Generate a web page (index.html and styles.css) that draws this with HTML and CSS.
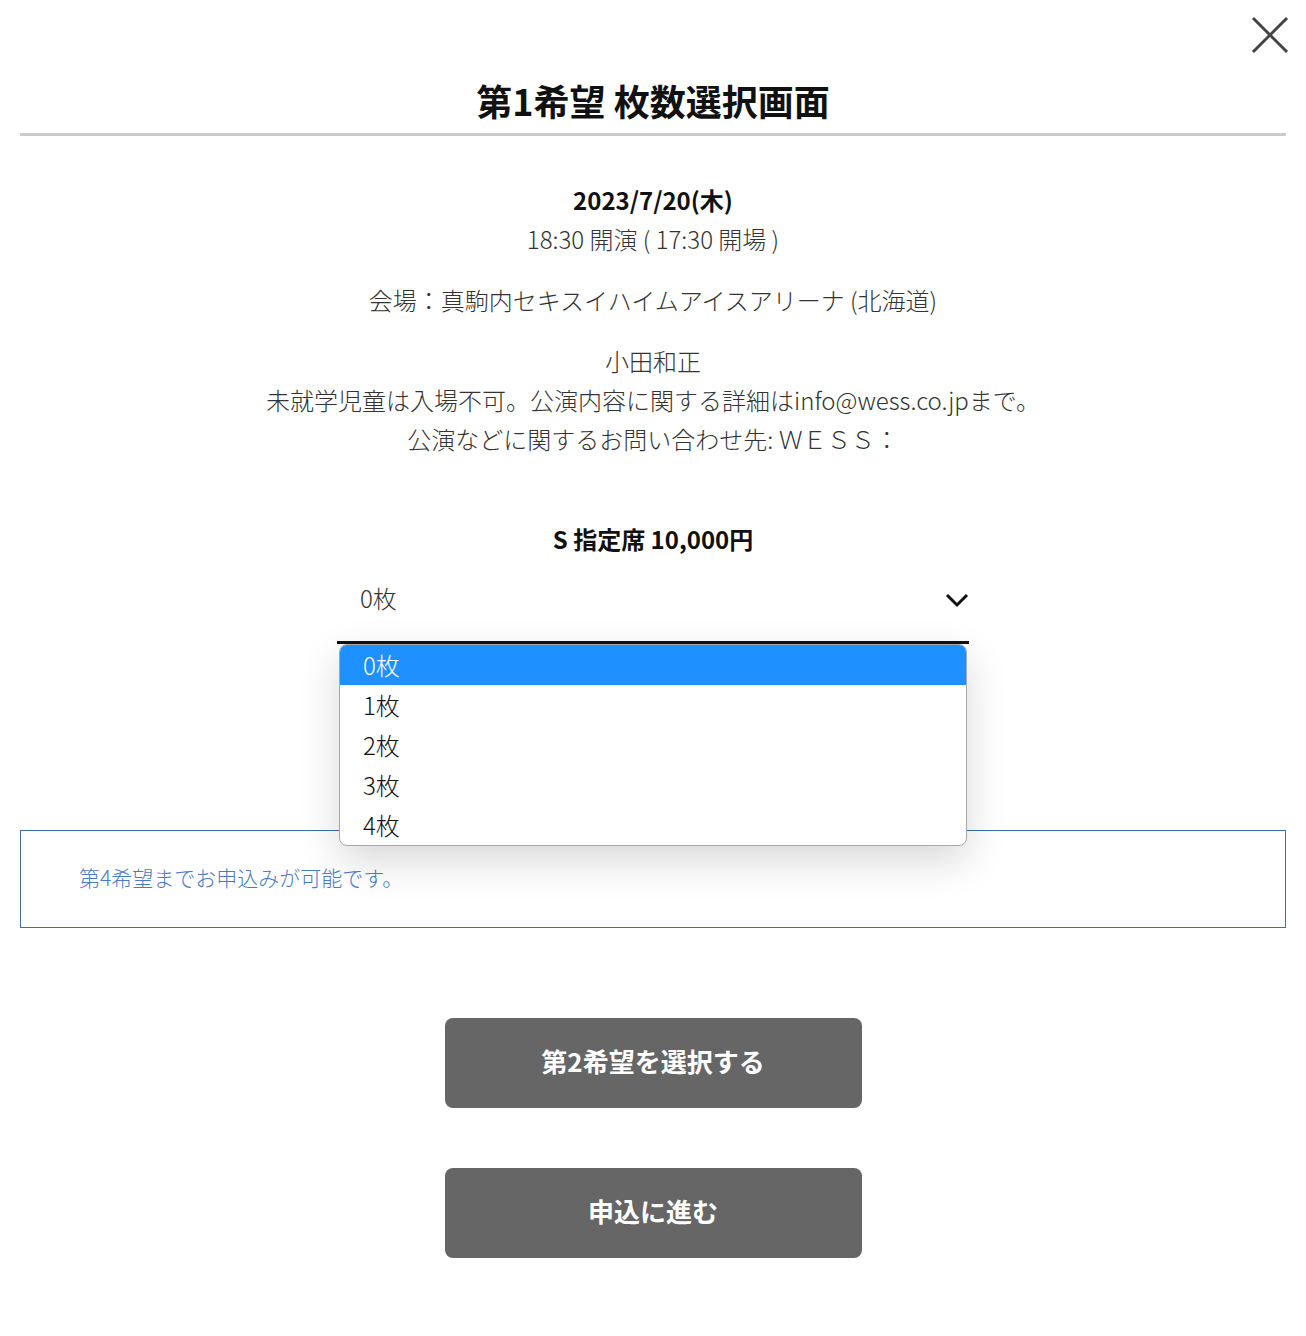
FILE: index.html
```html
<!DOCTYPE html>
<html lang="ja">
  <head>
    <meta charset="UTF-8" />
    <meta name="viewport" content="width=device-width, initial-scale=1.0" />
    <title>第1希望 枚数選択画面</title>
    <link rel="stylesheet" href="styles.css">
  </head>
  <body>
    <div class="modal">
      <button class="close-btn" aria-label="閉じる">
        <svg width="40" height="40" viewBox="0 0 40 40">
          <path d="M3 3 L37 37 M37 3 L3 37" stroke="#444" stroke-width="3" fill="none" />
        </svg>
      </button>

      <header class="modal-header">
        <h1>第1希望 枚数選択画面</h1>
      </header>

      <div class="event-info">
        <div class="info-group">
          <p class="event-date">2023/7/20(木)</p>
          <p>18:30 開演 ( 17:30 開場 )</p>
        </div>
        <div class="info-group">
          <p>会場：真駒内セキスイハイムアイスアリーナ (北海道)</p>
        </div>
        <div class="info-group">
          <p>小田和正</p>
          <p>未就学児童は入場不可。公演内容に関する詳細はinfo@wess.co.jpまで。</p>
          <p>公演などに関するお問い合わせ先: ＷＥＳＳ：</p>
        </div>
      </div>

      <div class="seat">
        <p class="seat-name">S 指定席 10,000円</p>
        <div class="select-wrap">
          <div class="select-box">
            <span>0枚</span>
            <svg class="chevron" width="24" height="16" viewBox="0 0 24 16">
              <path d="M2 3 L12 13 L22 3" stroke="#111" stroke-width="3" fill="none" />
            </svg>
          </div>
          <ul class="select-list">
            <li class="selected">0枚</li>
            <li>1枚</li>
            <li>2枚</li>
            <li>3枚</li>
            <li>4枚</li>
          </ul>
        </div>
      </div>

      <div class="notice">
        <p>第4希望までお申込みが可能です。</p>
      </div>

      <div class="actions">
        <button class="btn">第2希望を選択する</button>
        <button class="btn">申込に進む</button>
      </div>
    </div>
  </body>
</html>
```

FILE: styles.css
```css
body {
  margin: 0;
  padding: 0;
  background-color: #fff;
  font-family: "Noto Sans CJK JP", "Noto Sans", sans-serif;
  color: #333;
}

p {
  margin: 0;
}

.modal {
  position: relative;
  padding: 0 20px 60px;
}

.close-btn {
  position: absolute;
  top: 15px;
  right: 16px;
  width: 40px;
  height: 40px;
  padding: 0;
  border: none;
  background: none;
  cursor: pointer;
}

.modal-header {
  padding: 76px 0 9px;
  border-bottom: 3px solid #ccc;
  text-align: center;
}

.modal-header h1 {
  margin: 0;
  font-size: 36px;
  line-height: 48px;
  font-weight: 700;
  color: #111;
}

.event-info {
  margin-top: 44px;
  text-align: center;
  font-size: 24px;
  font-weight: 300;
  line-height: 39px;
}

.info-group + .info-group {
  margin-top: 22px;
}

.event-date {
  font-weight: 700;
  color: #111;
}

.seat {
  margin-top: 61px;
  text-align: center;
}

.seat-name {
  font-size: 24px;
  line-height: 39px;
  font-weight: 700;
  color: #111;
}

.select-wrap {
  position: relative;
  width: 632px;
  margin: 0 auto;
}

.select-box {
  display: flex;
  align-items: center;
  justify-content: space-between;
  height: 79px;
  padding: 0 0 4px 23px;
  border-bottom: 3px solid #111;
  font-size: 24px;
  font-weight: 300;
  text-align: left;
}

.chevron {
  margin-top: 4px;
}

.select-list {
  position: absolute;
  top: 86px;
  left: 2px;
  width: 626px;
  margin: 0;
  padding: 0;
  list-style: none;
  background: #fff;
  border: 1px solid #a8a8a8;
  border-radius: 8px;
  overflow: hidden;
  text-align: left;
  box-shadow: 0 14px 40px rgba(0, 0, 0, 0.16);
  z-index: 2;
}

.select-list li {
  height: 40px;
  line-height: 40px;
  padding-left: 23px;
  font-size: 24px;
  font-weight: 300;
  color: #111;
}

.select-list li.selected {
  background-color: #1e90ff;
  color: #fff;
}

.notice {
  margin-top: 186px;
  height: 92px;
  display: flex;
  align-items: center;
  padding: 0 0 4px 58px;
  border: 1px solid #3d6cb0;
}

.notice p {
  font-size: 21px;
  font-weight: 300;
  color: #4a7ac2;
}

.actions {
  display: flex;
  flex-direction: column;
  align-items: center;
  gap: 60px;
  margin-top: 90px;
}

.btn {
  width: 417px;
  height: 90px;
  padding: 0 0 6px;
  border: none;
  border-radius: 8px;
  background-color: #666;
  color: #fff;
  font-family: "Noto Sans CJK JP", "Noto Sans", sans-serif;
  font-size: 26px;
  font-weight: 700;
  cursor: pointer;
}
```
